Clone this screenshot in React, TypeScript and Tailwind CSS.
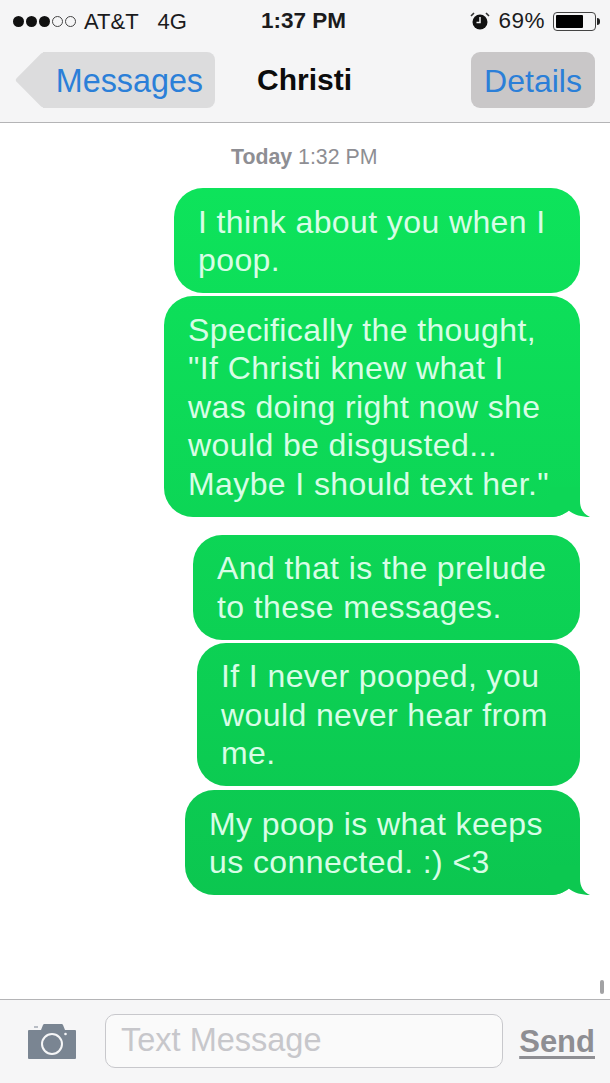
const font = "[font-family:'Liberation_Sans',Arial,sans-serif]";

function Tail({ fill }: { fill: string }) {
  return (
    <svg className="absolute right-[-12px] bottom-0" width="42" height="30" viewBox="0 0 42 30">
      <path d="M0 0 H30 V14 C30 21 33 27 40 30 C32 30 24 28 18 23 C13 28 8 30 0 30 Z" fill={fill} />
    </svg>
  );
}

function Bubble({ lines, width, tail, className }: { lines: string[]; width: string; tail?: string; className?: string }) {
  return (
    <div className={`relative rounded-[29px] bg-fixed bg-gradient-to-b from-[#0eeb5e] to-[#0bbf4d] pl-6 pr-2 pt-[14.5px] pb-[13.5px] ${width} ${className ?? ''}`}>
      {lines.map((l) => (
        <div key={l} className="h-[38.5px] whitespace-nowrap text-[32px] leading-[38.5px] tracking-[0.4px] text-[#d8fde6]">
          {l}
        </div>
      ))}
      {tail && <Tail fill={tail} />}
    </div>
  );
}

export default function App() {
  return (
    <div className={`flex h-[1083px] w-[610px] flex-col overflow-hidden bg-white ${font}`}>
      <header className="h-[123px] shrink-0 border-b border-[#b4b4b6] bg-[#f5f5f6]">
        <div className="flex h-[42px] items-center justify-between pl-[13px] pr-[10px] text-[#1b1b1d]">
          <div className="flex w-[190px] items-center">
            <div className="flex gap-[2px]">
              <span className="h-[11px] w-[11px] rounded-full bg-[#111]" />
              <span className="h-[11px] w-[11px] rounded-full bg-[#111]" />
              <span className="h-[11px] w-[11px] rounded-full bg-[#111]" />
              <span className="h-[11px] w-[11px] rounded-full border border-[#444]" />
              <span className="h-[11px] w-[11px] rounded-full border border-[#444]" />
            </div>
            <span className="ml-[8px] text-[22px]">AT&amp;T</span>
            <span className="ml-[19px] text-[22px]">4G</span>
          </div>
          <span className="absolute left-[261px] text-[22.5px] font-bold">1:37 PM</span>
          <div className="flex items-center">
            <svg width="20" height="20" viewBox="0 0 20 20" className="mr-[8px]">
              <circle cx="10" cy="11" r="7.5" fill="#111" />
              <path d="M10 6 V11.5 H6.5" stroke="#f5f5f6" strokeWidth="1.5" fill="none" />
              <path d="M1 5 L4 2 M19 5 L16 2" stroke="#333" strokeWidth="1.6" />
            </svg>
            <span className="mr-[8px] text-[22.5px] tracking-[0.5px]">69%</span>
            <div className="h-[19px] w-[43px] rounded-[4px] border border-[#444] p-[2px]">
              <div className="h-full w-[27px] rounded-[1px] bg-black" />
            </div>
            <div className="ml-[1px] h-[7px] w-[3px] rounded-r-sm bg-[#222]" />
          </div>
        </div>
        <div className="relative flex h-[57px] items-center justify-between pl-[43px] pr-[15px] pt-[18px]">
          <div className="relative flex h-[56px] w-[172px] items-center justify-end rounded-r-[8px] bg-[#dcdcdd] pr-[12px] pt-[3px]">
            <div className="absolute left-[-20px] top-[8px] h-[40px] w-[40px] rotate-45 rounded-[3px] bg-[#dcdcdd]" />
            <span className="relative text-[32.3px] text-[#2b7fd8]">Messages</span>
          </div>
          <span className="absolute left-[257px] top-[10px] text-[30px] font-bold leading-[56px] text-[#0c0c0c]">Christi</span>
          <div className="flex h-[56px] w-[124px] items-center justify-center rounded-[9px] bg-[#c9c7c8] pt-[3px]">
            <span className="text-[32px] text-[#2b7fd8]">Details</span>
          </div>
        </div>
      </header>

      <main className="relative flex flex-1 flex-col items-end pr-[30px]">
        <div className="mt-[22px] w-full self-start pl-[231px] text-[21.3px] leading-6 text-[#8e8e93]">
          <span className="font-bold">Today</span> 1:32 PM
        </div>
        <div className="mt-[19px] flex w-full flex-col items-end gap-[3px]">
          <Bubble width="w-[406px]" lines={['I think about you when I', 'poop.']} />
          <Bubble width="w-[416px]" tail="#0dd656" lines={['Specifically the thought,', '"If Christi knew what I', 'was doing right now she', 'would be disgusted...', 'Maybe I should text her."']} />
          <Bubble width="w-[387px]" className="mt-[15px]" lines={['And that is the prelude', 'to these messages.']} />
          <Bubble width="w-[383px]" lines={['If I never pooped, you', 'would never hear from', 'me.']} />
          <Bubble width="w-[395px]" className="mt-[1px]" tail="#0cc850" lines={['My poop is what keeps', 'us connected. :) <3']} />
        </div>
        <div className="absolute bottom-[5px] right-[6px] h-[14px] w-[4px] rounded-full bg-[#a2a2a4]" />
      </main>

      <footer className="flex h-[84px] shrink-0 items-center border-t border-[#b4b4b6] bg-[#f6f6f7] pl-[28px] pr-[15px]">
        <svg width="48" height="36" viewBox="0 0 48 36" className="shrink-0">
          <path d="M6 2.5 H10 V3.5 H6 Z" fill="#7a8592" />
          <path d="M1 6 H13 L15 1 Q15.300 0 16.500 0 H33.500 Q34.700 0 35 1 L37 6 H47 Q48 6 48 7 V34 Q48 35 47 35 H1 Q0 35 0 34 V7 Q0 6 1 6 Z" fill="#7a8592" />
          <circle cx="24" cy="20" r="10" fill="none" stroke="#f6f6f7" strokeWidth="2" />
          <circle cx="37.500" cy="10" r="1.300" fill="#f6f6f7" />
        </svg>
        <div className="mb-[2px] ml-[29px] flex h-[54px] w-[398px] shrink-0 items-center rounded-[10px] border border-[#c8c8cc] bg-[#fafafa] pl-[15px] text-[32.5px] text-[#c7c7cb]">
          Text Message
        </div>
        <span className="ml-auto text-[31px] font-bold leading-[32px] text-[#8e8e93] underline underline-offset-[4px]">Send</span>
      </footer>
    </div>
  );
}
